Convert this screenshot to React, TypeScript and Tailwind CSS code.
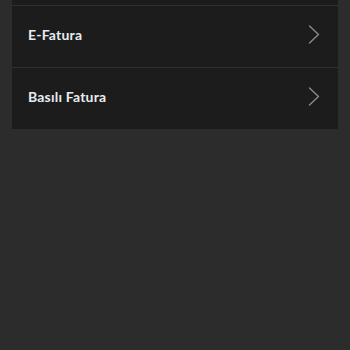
export default function App() {
  const rows = ['E-Fatura', 'Basılı Fatura'];
  return (
    <div className="h-[350px] w-[350px] bg-[#2c2c2c] px-3" style={{ fontFamily: 'Lato, "Liberation Sans", sans-serif' }}>
      <div className="bg-[#1c1c1c]">
        <div className="h-[5px]" />
        {rows.map((label) => (
          <div key={label} className="flex h-[62px] items-center justify-between border-t border-[#303030] pb-[4px] pl-4 pr-[18px]">
            <span className="text-[14px] font-bold tracking-[0.2px] text-[#e6ecf0]">{label}</span>
            <svg width="12" height="19" viewBox="0 0 12 19" fill="none">
              <path d="M1.5 1 L10.5 9.5 L1.5 18" stroke="#8a8a8a" strokeWidth="1.4" strokeLinecap="round" strokeLinejoin="round" />
            </svg>
          </div>
        ))}
      </div>
    </div>
  );
}
